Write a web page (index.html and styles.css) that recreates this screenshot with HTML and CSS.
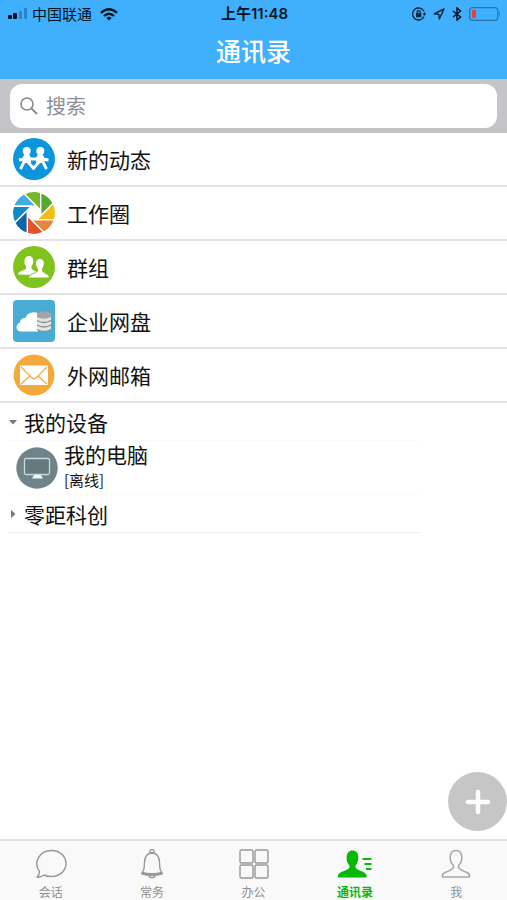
FILE: index.html
```html
<!DOCTYPE html>
<html lang="zh-CN">
<head>
<meta charset="utf-8">
<meta name="viewport" content="width=device-width, initial-scale=1">
<title>通讯录</title>
<link rel="stylesheet" href="styles.css">
</head>
<body>
<header class="header">
  <div class="status">
    <div class="status-side">
      <svg width="20" height="12" viewBox="0 0 20 12"><rect x="0" y="7" width="4" height="4" rx="1" fill="#06131f"/><rect x="5" y="5" width="4" height="6" rx="1" fill="#06131f"/><rect x="11" y="3" width="3" height="8" rx="1" fill="#2c84c4"/><rect x="16" y="0" width="3" height="11" rx="1" fill="#2c84c4"/></svg>
      <span class="carrier">中国联通</span>
      <svg class="wifi" width="18" height="13" viewBox="0 0 18 13" fill="none" stroke="#06131f" stroke-width="2.3"><path d="M1 4.8Q9-2.2 17 4.8M4 8Q9 3.6 14 8"/><path d="M9 12.6 6.3 9.9Q9 7.8 11.7 9.9Z" fill="#06131f" stroke="none"/></svg>
    </div>
    <time class="clock">上午11:48</time>
    <div class="status-side status-right">
      <svg width="14" height="14" viewBox="0 0 14 14" fill="none" stroke="#0c2438" stroke-width="1.3"><path d="M12 4.5A6 6 0 1 0 12 9.5M12.6 5.5V8"/><path d="M10.6 6.6h3.4l-1.7 2.4Z" fill="#0c2438" stroke="none"/><rect x="4" y="6.2" width="5.4" height="4" fill="#0c2438" stroke="none"/><path d="M5.1 6.5V5.2a1.6 1.6 0 0 1 3.2 0v1.3"/></svg>
      <svg width="12" height="12" viewBox="0 0 12 12" fill="none" stroke="#0c2438" stroke-width="1.4" stroke-linejoin="round"><path d="M11 1 1 5.8 5.8 6.2 6.3 11Z"/></svg>
      <svg width="10" height="14" viewBox="0 0 10 14" fill="none" stroke="#06131f" stroke-width="1.5"><path d="M1 4 8.6 10 5 13V1L8.6 4 1 10"/></svg>
      <svg width="32" height="14" viewBox="0 0 32 14"><rect x=".7" y=".7" width="28" height="12.6" rx="2.5" fill="none" stroke="#2a74ac" stroke-width="1.3"/><rect x="3" y="3" width="4" height="8" fill="#f23b3b"/><path d="M30 4.5q2 2.5 0 5Z" fill="#2a74ac"/></svg>
    </div>
  </div>
  <h1 class="title">通讯录</h1>
</header>
<form class="search">
  <label class="search-box">
    <svg width="18" height="18" viewBox="0 0 18 18" fill="none" stroke="#88888c" stroke-width="1.6"><circle cx="7" cy="7" r="6"/><path d="M11.4 11.4 17 17" stroke-width="2"/></svg>
    <input class="search-input" type="text" placeholder="搜索" aria-label="搜索">
  </label>
</form>
<main class="main">
  <nav class="list">
    <a class="row" href="#">
      <svg width="42" height="42" viewBox="0 0 42 42"><circle cx="21" cy="21" r="21" fill="#0a95dc"/><g fill="#fff"><circle cx="13.700" cy="13" r="4"/><circle cx="27.300" cy="13" r="4"/><path d="M11.500 16H16L18 20V25H9.500V20ZM25 16H29.500L31.500 20V25H23V20Z"/></g><path d="M6 22 12 21H29L35.500 22M11 24 7.500 31M15 24 21 31M26 24 20 31M30 24 33.500 31" fill="none" stroke="#fff" stroke-width="2.800"/></svg>
      新的动态</a>
    <a class="row" href="#">
      <svg width="42" height="42" viewBox="-21 -21 42 42"><defs><path id="blade" d="M2.8-6.7H-20.500A21.600 21.600 0 0 1-9.700-19.300Z"/></defs><g stroke="#fff" stroke-width="1.4"><use href="#blade" fill="#43ace0"/><use href="#blade" fill="#76b82a" transform="rotate(45)"/><use href="#blade" fill="#55a92c" transform="rotate(90)"/><use href="#blade" fill="#f5bd12" transform="rotate(135)"/><use href="#blade" fill="#ea8436" transform="rotate(180)"/><use href="#blade" fill="#e2532b" transform="rotate(225)"/><use href="#blade" fill="#0e64a8" transform="rotate(270)"/><use href="#blade" fill="#1688c8" transform="rotate(315)"/></g></svg>
      工作圈</a>
    <a class="row" href="#">
      <svg width="42" height="42" viewBox="0 0 42 42"><circle cx="21" cy="21" r="21" fill="#7fc31c"/><path d="M5 28.5C5 25 12 24.500 13 22.500V20C10.500 18 10.500 10 16 10S21 18 18.500 20V22.500C19 24 22 24.500 23 26L22 29Z" fill="#fff"/><path d="M15.500 32C15.500 28 23 27.500 24.500 25V22.500C21.500 20 21.500 12.500 27 12.500S32 20 29.500 22.500V25C31 27.500 36.500 28 36.500 32Z" fill="#fff" stroke="#7fc31c" stroke-width="1"/></svg>
      群组</a>
    <a class="row" href="#">
      <svg width="42" height="42" viewBox="0 0 42 42"><rect width="42" height="42" rx="4" fill="#48acd5"/><path d="M8 31.500C3 31.500 1.500 25 7 22.500 7 19 10 17.500 12.500 18 14 13 20 11 25 13V31.500Z" fill="#fff"/><path d="M24 13V29.500Q31 34 38 29.500V13Z" fill="#e3e4e5"/><path d="M24 13Q31 9.500 38 13V17Q31 20.500 24 17Z" fill="#a2a4a6"/><path d="M24 20.500Q31 24.500 38 20.500M24 25Q31 29 38 25M24 29.500Q31 33.500 38 29.500" fill="none" stroke="#898d90" stroke-width="1.300"/></svg>
      企业网盘</a>
    <a class="row" href="#">
      <svg width="42" height="42" viewBox="0 0 42 42"><circle cx="21" cy="21" r="20.500" fill="#f3a93c"/><rect x="7" y="11.500" width="28" height="19.500" rx="1" fill="#fff"/><path d="M8 13 18.500 23.500Q21 26 23.500 23.500L34 13M8 30 17 22M34 30 25 22" fill="none" stroke="#f3a93c" stroke-width="1.200"/></svg>
      外网邮箱</a>
  </nav>
  <section class="tree">
    <button class="group" type="button" aria-expanded="true"><svg width="10" height="10" viewBox="0 0 10 10"><path d="M1 3H9L5 7.500Z" fill="#777"/></svg>我的设备</button>
    <a class="device" href="#">
      <svg width="42" height="42" viewBox="0 0 42 42"><circle cx="21" cy="21" r="20.700" fill="#6f8388"/><rect x="8.500" y="11.500" width="25" height="16" rx="1.500" fill="#66797e" stroke="#c4d8df" stroke-width="1.300"/><path d="M18 28H25L27 31.500H16Z" fill="#f2f7f8"/></svg>
      <span class="device-text"><span class="device-name">我的电脑</span><span class="device-state">[离线]</span></span>
    </a>
    <button class="group group-last" type="button" aria-expanded="false"><svg width="10" height="10" viewBox="0 0 10 10"><path d="M3 1V9L7.500 5Z" fill="#777"/></svg>零距科创</button>
  </section>
  <button class="fab" type="button" aria-label="添加"><svg width="26" height="26" viewBox="0 0 26 26" stroke="#fff" stroke-width="4.500" stroke-linecap="round"><path d="M13 3V23M3 13H23"/></svg></button>
</main>
<nav class="tabs">
  <a class="tab" href="#"><svg width="34" height="30" viewBox="0 0 34 30" fill="none" stroke="#989898" stroke-width="1.400" stroke-linejoin="round"><path d="M5.500 22.500C-1 14 5 1.500 17.500 1.500 26 1.500 32 7.500 32 14.500S26 27.500 17.500 27.500C14.500 27.500 12 27 10 26 8 27.500 5 28.500 3 28 5 26.500 5.500 25 5.500 22.500Z"/></svg>会话</a>
  <a class="tab" href="#"><svg width="34" height="30" viewBox="0 0 34 30" fill="none" stroke="#989898" stroke-width="1.400" stroke-linejoin="round"><circle cx="17" cy="2.500" r="2"/><path d="M7 23.500C10 21 9 17 9.500 13 10 7 13 4 17 4S24 7 24.500 13C25 17 24 21 27 23.500V25Q17 27.500 7 25ZM7 23.500Q17 26 27 23.500M13.500 26.500Q17 31 20.500 26.500"/></svg>常务</a>
  <a class="tab" href="#"><svg width="34" height="30" viewBox="0 0 34 30" fill="none" stroke="#989898" stroke-width="1.400"><rect x="3" y="1" width="13" height="13" rx="1.500"/><rect x="18" y="1" width="13" height="13" rx="1.500"/><rect x="3" y="16" width="13" height="13" rx="1.500"/><rect x="18" y="16" width="13" height="13" rx="1.500"/></svg>办公</a>
  <a class="tab tab-active" href="#" aria-current="page"><svg width="34" height="30" viewBox="0 0 34 30"><path d="M0 28.500V26C2 22 10 21.500 11.500 18.500V16.500C7.500 12.500 7 1.500 14.500 1.500S21.500 12.500 17.500 16.500V18.500C19 21.500 27 22 28.500 26V28.500Z" fill="#06b906"/><path d="M24.500 10H33.500M26.500 15H33.500M28 20H33.500" stroke="#06b906" stroke-width="1.800"/></svg>通讯录</a>
  <a class="tab" href="#"><svg width="34" height="30" viewBox="0 0 34 30" fill="none" stroke="#a6a6a6" stroke-width="1.500" stroke-linejoin="round"><path d="M3.500 28C3 26 4 24.500 6 23.500 9 22 13.500 21 14.500 18.500V16.500C10 12.500 9.500 1.500 17 1.500S24 12.500 19.500 16.500V18.500C20.500 21 25 22 28 23.500 30 24.500 31 26 30.500 28Z"/></svg>我</a>
</nav>
</body>
</html>
```

FILE: styles.css
```css
* {
  box-sizing: border-box;
}

body {
  margin: 0;
  min-height: 100vh;
  display: flex;
  flex-direction: column;
  background: #fff;
  color: #111;
  font-family: "Noto Sans CJK SC", "Noto Sans", sans-serif;
}

a {
  color: inherit;
  text-decoration: none;
}

button {
  border: 0;
  background: none;
  color: inherit;
  font: inherit;
}

svg {
  flex: none;
  display: block;
}

.header {
  background: #40b0fd;
}

.status {
  display: grid;
  grid-template-columns: 1fr auto 1fr;
  align-items: center;
  height: 28px;
  padding: 0 6px 0 8px;
  color: #06131f;
}

.status-side {
  display: flex;
  align-items: center;
  gap: 4px;
}

.status-right {
  justify-content: flex-end;
  gap: 7px;
}

.carrier {
  font-size: 15px;
  line-height: 20px;
}

.wifi {
  margin-left: 4px;
}

.clock {
  font-family: Inter, "Noto Sans CJK SC", sans-serif;
  font-size: 15px;
  font-weight: 600;
  line-height: 20px;
}

.title {
  margin: 0;
  padding: 4px 0 11px;
  color: #fff;
  font-size: 25px;
  font-weight: 500;
  line-height: 36px;
  text-align: center;
}

.search {
  padding: 5px 10px;
  background: #c5c4c9;
}

.search-box {
  display: flex;
  align-items: center;
  gap: 8px;
  height: 44px;
  padding: 0 10px;
  border-radius: 12px;
  background: #fff;
}

.search-input {
  flex: 1;
  min-width: 0;
  padding: 0;
  border: 0;
  outline: 0;
  background: none;
  font: inherit;
  font-size: 20px;
  line-height: 30px;
}

.search-input::placeholder {
  color: #8e8e93;
}

.main {
  position: relative;
  flex: 1;
}

.row {
  display: flex;
  align-items: center;
  gap: 12px;
  height: 54px;
  padding: 0 13px;
  border-bottom: 2px solid #e5e5e7;
  font-size: 21px;
  line-height: 30px;
}

.tree {
  padding: 0 8px;
}

.group {
  display: flex;
  align-items: center;
  gap: 6px;
  width: 84%;
  height: 38px;
  padding: 0;
  border-bottom: 1px solid #fafafa;
  font-size: 21px;
  line-height: 30px;
}

.group-last {
  border-bottom-color: #efefef;
}

.device {
  display: flex;
  align-items: center;
  gap: 6px;
  width: 84%;
  height: 54px;
  padding-left: 8px;
  border-bottom: 1px solid #fafafa;
}

.device-text {
  display: flex;
  flex-direction: column;
  padding-bottom: 6px;
}

.device-name {
  font-size: 21px;
  line-height: 30px;
}

.device-state {
  font-size: 15px;
  line-height: 22px;
}

.fab {
  position: absolute;
  right: 0;
  bottom: 8px;
  display: grid;
  place-items: center;
  width: 59px;
  height: 59px;
  padding: 0;
  border-radius: 50%;
  background: #c6c6c6;
}

.tabs {
  display: flex;
  height: 61px;
  border-top: 2px solid #e2e2e2;
  background: #f9f9f9;
}

.tab {
  flex: 1;
  display: flex;
  flex-direction: column;
  align-items: center;
  gap: 4px;
  padding-top: 8px;
  color: #8f8f8f;
  font-size: 12px;
  line-height: 18px;
}

.tab-active {
  color: #06b906;
  font-weight: 700;
}
```
